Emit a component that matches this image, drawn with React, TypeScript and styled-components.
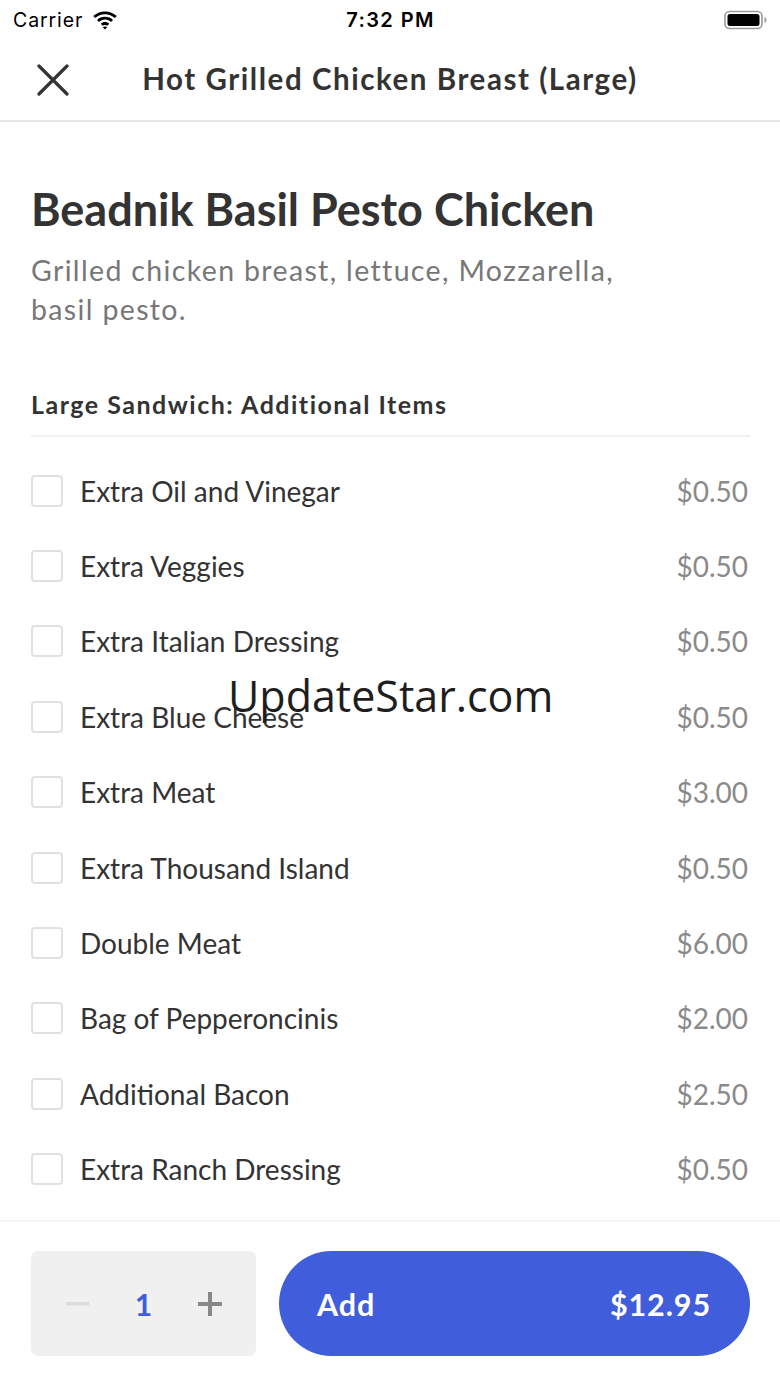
import React from "react";
import styled, { createGlobalStyle } from "styled-components";

const GlobalStyle = createGlobalStyle`
  html, body { margin: 0; padding: 0; background: #fff; }
  body { font-family: Lato, "Noto Sans", sans-serif; -webkit-font-smoothing: antialiased; }
  * { box-sizing: border-box; }
`;

const Screen = styled.div`
  position: relative;
  width: 780px;
  height: 1387px;
  display: flex;
  flex-direction: column;
  background: #fff;
  overflow: hidden;
`;

const StatusBar = styled.div`
  height: 40px;
  display: grid;
  grid-template-columns: 1fr auto 1fr;
  align-items: center;
  padding: 0 12px 0 13px;
  font-family: Inter, "Liberation Sans", sans-serif;
  font-size: 19.5px;
  letter-spacing: 0.9px;
  color: #000;
`;

const StatusLeft = styled.div`
  display: flex;
  align-items: center;
  gap: 9px;
`;

const StatusTime = styled.div`
  font-weight: 600;
  font-size: 20px;
  letter-spacing: 1.4px;
`;

const StatusRight = styled.div`
  display: flex;
  justify-content: flex-end;
  align-items: center;
`;

const NavBar = styled.div`
  height: 82px;
  display: flex;
  align-items: center;
  justify-content: center;
  position: relative;
  border-bottom: 2px solid #e6e6e6;
`;

const CloseButton = styled.button`
  position: absolute;
  left: 33px;
  top: 20px;
  width: 40px;
  height: 40px;
  padding: 0;
  border: none;
  background: none;
  display: flex;
  align-items: center;
  justify-content: center;
`;

const NavTitle = styled.div`
  font-size: 29.5px;
  font-weight: 700;
  letter-spacing: 1.55px;
  color: #333;
  margin-top: -4px;
`;

const Content = styled.div`
  flex: 1;
  padding: 61px 30px 0 31px;
  display: flex;
  flex-direction: column;
`;

const Title = styled.h1`
  margin: 0;
  font-size: 45px;
  line-height: 52px;
  font-weight: 700;
  color: #333;
`;

const Description = styled.p`
  margin: 16px 0 0;
  font-size: 28.5px;
  line-height: 39px;
  letter-spacing: 1.35px;
  color: #777;
  max-width: 600px;
`;

const SectionHeading = styled.h2`
  margin: 60px 0 0;
  font-size: 25px;
  line-height: 30px;
  font-weight: 700;
  letter-spacing: 1.5px;
  color: #333;
  padding-bottom: 16px;
  border-bottom: 2px solid #f0f0f0;
`;

const List = styled.div`
  margin-top: 16px;
  display: flex;
  flex-direction: column;
`;

const Row = styled.label`
  height: 75.4px;
  display: flex;
  align-items: center;
`;

const Checkbox = styled.span`
  width: 32px;
  height: 32px;
  border: 2px solid #e1e1e1;
  border-radius: 4px;
  flex: none;
`;

const ItemName = styled.span`
  margin-left: 17px;
  flex: 1;
  font-size: 28px;
  color: #333;
`;

const ItemPrice = styled.span`
  font-size: 28px;
  color: #8a8a8a;
  margin-right: 2px;
`;

const Footer = styled.div`
  height: 167px;
  border-top: 2px solid #f4f4f4;
  padding: 29px 30px 31px 31px;
  display: flex;
  gap: 23px;
`;

const Stepper = styled.div`
  width: 225px;
  height: 105px;
  background: #f0f0f0;
  border-radius: 7px;
  display: flex;
  align-items: center;
  padding: 0 34px 0 35px;
  justify-content: space-between;
`;

const StepIcon = styled.span<{ $color: string }>`
  display: flex;
  color: ${(p) => p.$color};
`;

const Quantity = styled.span`
  font-size: 30px;
  font-weight: 700;
  color: #405ddb;
`;

const AddButton = styled.button`
  flex: 1;
  height: 105px;
  border: none;
  border-radius: 53px;
  background: #405ddb;
  color: #fff;
  display: flex;
  align-items: center;
  justify-content: space-between;
  padding: 0 39px 0 38px;
  font-family: Lato, sans-serif;
  font-size: 30.5px;
  font-weight: 700;
  letter-spacing: 0.9px;
`;

const Watermark = styled.div`
  position: absolute;
  left: 228px;
  top: 668px;
  font-family: "Open Sans", "Noto Sans", sans-serif;
  font-size: 43px;
  line-height: 56px;
  color: #1e1e1e;
  pointer-events: none;
`;

const items: [string, string][] = [
  ["Extra Oil and Vinegar", "$0.50"],
  ["Extra Veggies", "$0.50"],
  ["Extra Italian Dressing", "$0.50"],
  ["Extra Blue Cheese", "$0.50"],
  ["Extra Meat", "$3.00"],
  ["Extra Thousand Island", "$0.50"],
  ["Double Meat", "$6.00"],
  ["Bag of Pepperoncinis", "$2.00"],
  ["Additional Bacon", "$2.50"],
  ["Extra Ranch Dressing", "$0.50"],
];

const Wifi = () => (
  <svg width="26" height="19" viewBox="0 0 26 19">
    <path d="M13 3.2c3.8 0 7.2 1.5 9.8 3.9l2-2C21.7 2.2 17.6.5 13 .5S4.3 2.2 1.2 5.1l2 2C5.8 4.7 9.2 3.2 13 3.2z" fill="#000" />
    <path d="M13 8.6c2.3 0 4.4.9 6 2.4l2-2.1C18.9 7 16.1 5.8 13 5.8S7.1 7 5 8.9l2 2.1c1.6-1.5 3.7-2.4 6-2.4z" fill="#000" />
    <path d="M13 13.9c.9 0 1.7.3 2.3.9l2-2.1c-1.1-1.1-2.6-1.7-4.3-1.7s-3.2.6-4.3 1.7l2 2.1c.6-.6 1.4-.9 2.3-.9z" fill="#000" />
    <path d="M13 18.5l2.2-2.3c-.6-.5-1.4-.8-2.200-.8s-1.6.3-2.2.8z" fill="#000" />
  </svg>
);

const Battery = () => (
  <svg width="44" height="20" viewBox="0 0 44 20">
    <rect x="1" y="1.5" width="37" height="17" rx="4.5" fill="none" stroke="#9a9a9a" strokeWidth="1.6" />
    <rect x="3.5" y="4" width="32" height="12" rx="2.5" fill="#000" />
    <path d="M40.5 7v6c1.3-.4 2-1.6 2-3s-.7-2.6-2-3z" fill="#9a9a9a" />
  </svg>
);

export default function App() {
  return (
    <>
      <GlobalStyle />
      <Screen>
        <StatusBar>
          <StatusLeft>
            Carrier
            <Wifi />
          </StatusLeft>
          <StatusTime>7:32 PM</StatusTime>
          <StatusRight>
            <Battery />
          </StatusRight>
        </StatusBar>
        <NavBar>
          <CloseButton aria-label="Close">
            <svg width="32" height="32" viewBox="0 0 32 32">
              <path d="M2 2L30 30M30 2L2 30" stroke="#333" strokeWidth="3.2" strokeLinecap="round" />
            </svg>
          </CloseButton>
          <NavTitle>Hot Grilled Chicken Breast (Large)</NavTitle>
        </NavBar>
        <Content>
          <Title>Beadnik Basil Pesto Chicken</Title>
          <Description>Grilled chicken breast, lettuce, Mozzarella, basil pesto.</Description>
          <SectionHeading>Large Sandwich: Additional Items</SectionHeading>
          <List>
            {items.map(([name, price]) => (
              <Row key={name}>
                <Checkbox />
                <ItemName>{name}</ItemName>
                <ItemPrice>{price}</ItemPrice>
              </Row>
            ))}
          </List>
        </Content>
        <Footer>
          <Stepper>
            <StepIcon $color="#dcdcdc">
              <svg width="23" height="4" viewBox="0 0 23 4">
                <rect width="23" height="3.5" fill="currentColor" />
              </svg>
            </StepIcon>
            <Quantity>1</Quantity>
            <StepIcon $color="#888">
              <svg width="24" height="24" viewBox="0 0 24 24">
                <rect x="10" y="0" width="4" height="24" fill="currentColor" />
                <rect x="0" y="10" width="24" height="4" fill="currentColor" />
              </svg>
            </StepIcon>
          </Stepper>
          <AddButton>
            <span>Add</span>
            <span>$12.95</span>
          </AddButton>
        </Footer>
        <Watermark>UpdateStar.com</Watermark>
      </Screen>
    </>
  );
}
